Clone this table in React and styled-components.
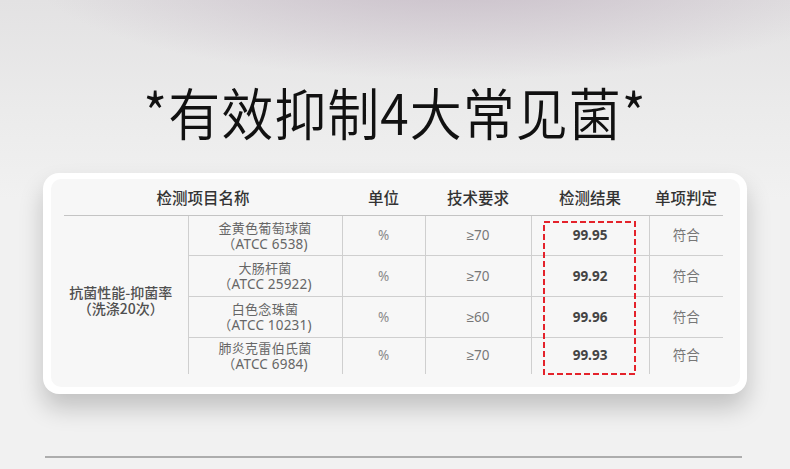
import React from 'react';
import styled, { createGlobalStyle } from 'styled-components';

const GlobalStyle = createGlobalStyle`
  html, body { margin: 0; padding: 0; }
  body {
    width: 790px; height: 469px; overflow: hidden;
    font-family: "Noto Sans CJK SC", "Noto Sans", sans-serif;
  }
`;

const rows = [
    { name: '金黄色葡萄球菌', code: 'ATCC 6538)', req: '≥70', result: '99.95', h: 40 },
    { name: '大肠杆菌', code: 'ATCC 25922)', req: '≥70', result: '99.92', h: 41 },
    { name: '白色念珠菌', code: 'ATCC 10231)', req: '≥60', result: '99.96', h: 41 },
    { name: '肺炎克雷伯氏菌', code: 'ATCC 6984)', req: '≥70', result: '99.93', h: 36 },
];

const App = () => {
    return (
        <Page>
            <GlobalStyle />
            <Title>*有效抑制4大常见菌*</Title>

            <Card>
                <Panel>
                    <TableWrap>
                        <Table>
                            <colgroup>
                                <col style={{ width: 124 }} />
                                <col style={{ width: 154 }} />
                                <col style={{ width: 83 }} />
                                <col style={{ width: 106 }} />
                                <col style={{ width: 118 }} />
                                <col style={{ width: 74 }} />
                            </colgroup>
                            <thead>
                                <tr>
                                    <th colSpan="2">检测项目名称</th>
                                    <th>单位</th>
                                    <th>技术要求</th>
                                    <th>检测结果</th>
                                    <th>单项判定</th>
                                </tr>
                            </thead>
                            <tbody>
                                {rows.map((row, i) => (
                                    <tr key={row.code} style={{ height: row.h }}>
                                        {i === 0 && (
                                            <GroupCell rowSpan={rows.length}>
                                                抗菌性能-抑菌率<br />（洗涤20次）
                                            </GroupCell>
                                        )}
                                        <NameCell $first={i === 0}>
                                            {row.name}<br />（<Code>{row.code}</Code>
                                        </NameCell>
                                        <Cell $first={i === 0} $light>%</Cell>
                                        <Cell $first={i === 0}>{row.req}</Cell>
                                        <ValueCell $first={i === 0}>{row.result}</ValueCell>
                                        <Cell $first={i === 0}>符合</Cell>
                                    </tr>
                                ))}
                            </tbody>
                        </Table>
                        <Highlight width="93" height="154" viewBox="0 0 93 154">
                            <rect x="1" y="1" width="91" height="152" fill="none"
                                stroke="#e4222b" strokeWidth="2" strokeDasharray="6 3" />
                        </Highlight>
                    </TableWrap>
                </Panel>
            </Card>

            <Rule />
        </Page>
    );
};

export default App;

const Page = styled.div`
  width: 790px; height: 469px;
  display: flex; flex-direction: column;
  background:
    radial-gradient(ellipse 430px 110px at 58% -30px, rgba(196, 184, 196, 0.9), rgba(210, 202, 210, 0) 100%),
    linear-gradient(180deg, #e3e2e3 0%, #ebebeb 110px, #f1f1f1 200px, #f1f1f1 100%);
`;

const Title = styled.h1`
  margin: 0; padding-top: 78px;
  height: 60px; line-height: 60px;
  text-align: center;
  font-size: 52px; font-weight: 350; color: #111;
  transform: scaleY(1.08);
  letter-spacing: 1px;
`;

const Card = styled.div`
  margin: 35px 43px 0 43px;
  padding: 6px 7px 7px 8px;
  background: #fff;
  border-radius: 16px;
  box-shadow: 0 14px 24px rgba(0, 0, 0, 0.2);
`;

const Panel = styled.div`
  height: 208px;
  background: #f7f7f7;
  border-radius: 10px;
  padding-left: 13px;
  box-sizing: border-box;
`;

const TableWrap = styled.div`
  position: relative;
  width: 659px;
`;

const Table = styled.table`
  width: 659px; border-collapse: collapse; table-layout: fixed;

  th {
    height: 36px; padding: 0;
    font-size: 15.5px; font-weight: 500; color: #333;
    text-align: center; vertical-align: middle;
    border-bottom: 1px solid #c4c4c4;
  }
`;

const Cell = styled.td`
  padding: 0;
  text-align: center; vertical-align: middle;
  font-family: "Noto Sans", "Liberation Sans", "Noto Sans CJK SC", sans-serif;
  font-size: 13.5px; line-height: 15px;
  color: ${({ $light }) => $light ? '#8a8a8a' : '#777'};
  border-left: 1px solid #cfcfcf;
  border-top: ${({ $first }) => $first ? 'none' : '1px solid #cfcfcf'};
`;

const NameCell = styled(Cell)`
  color: #666; line-height: 16px;
  font-family: "Noto Sans CJK SC", sans-serif;
  font-size: 13px; letter-spacing: 0.3px;
`;

const Code = styled.span`
  font-family: "Noto Sans", sans-serif;
  font-size: 13.5px; letter-spacing: 0.2px;
`;

const ValueCell = styled(Cell)`
  color: #444; font-weight: 700; font-size: 13.5px;
`;

const GroupCell = styled.td`
  padding: 10px 10px 0 0;
  text-align: center; vertical-align: middle;
  font-size: 14px; line-height: 16px; font-weight: 500; color: #505050;
`;

const Highlight = styled.svg`
  position: absolute; left: 479px; top: 42px;
`;

const Rule = styled.div`
  margin: 62px 48px 0 45px;
  height: 2px;
  background: #adadad;
`;
